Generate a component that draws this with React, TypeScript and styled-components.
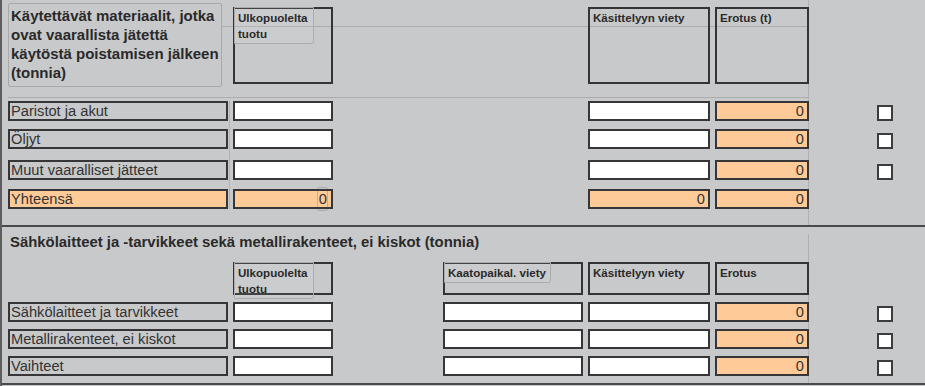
import React from "react";
import styled, { createGlobalStyle } from "styled-components";

const GlobalStyle = createGlobalStyle`
  html, body {
    margin: 0;
    padding: 0;
    background: #c8c9cb;
  }
  body {
    font-family: "Liberation Sans", Arial, sans-serif;
    color: #333;
    overflow: hidden;
  }
`;

/* Column tracks shared by header bands and data rows:
   label | outside | landfill | processed | difference | flag */
const COLS = "225px 210px 145px 127px 162px 16px";

const Page = styled.div`
  width: 925px;
  height: 386px;
  box-sizing: border-box;
  border-left: 2px solid #5e5e60;
  background: #c8c9cb;
`;

const Block = styled.section<{ $padBottom: number }>`
  margin-left: 6px;
  width: 800px;
  padding-bottom: ${(p) => p.$padBottom}px;
  border-right: 1px solid #b1b1b3;
`;

const Divider = styled.hr`
  margin: 0;
  border: 0;
  height: 2px;
  background: #4a4a4c;
`;

const HeaderBand = styled.div`
  display: grid;
  grid-template-columns: ${COLS};
  align-items: start;
  height: 97px;
  border-bottom: 1px solid #adadaf;
  background: linear-gradient(#aeaeb0, #aeaeb0) no-repeat 213px 26px / 587px 1px;
`;

const HeaderRow = styled.div<{ $gap: number }>`
  display: grid;
  grid-template-columns: ${COLS};
  align-items: start;
  margin-top: ${(p) => p.$gap}px;
`;

const TitleBox = styled.div`
  margin-top: 3px;
  width: 214px;
  height: 84px;
  box-sizing: border-box;
  padding: 2px 0 0 2px;
  border: 1px solid #a9a9ab;
  border-radius: 2px;
  font-size: 15px;
  font-weight: bold;
  line-height: 19px;
  color: #2a2a2a;
  white-space: nowrap;
`;

const SectionTitle = styled.h2`
  margin: 7px 0 0;
  padding-left: 2px;
  font-size: 14.9px;
  font-weight: bold;
  line-height: 17px;
  color: #2a2a2a;
  white-space: nowrap;
`;

const HeadBox = styled.div<{ $col: number; $w: number; $h: number; $top?: number }>`
  grid-column: ${(p) => p.$col};
  margin-top: ${(p) => p.$top ?? 0}px;
  width: ${(p) => p.$w}px;
  height: ${(p) => p.$h}px;
  box-sizing: border-box;
  border: 2px solid #343436;
  font-size: 11.6px;
  font-weight: bold;
  line-height: 16px;
  color: #2a2a2a;
`;

const HeadCaption = styled.div<{ $w?: number; $framed?: boolean }>`
  width: ${(p) => (p.$w ? `${p.$w}px` : "auto")};
  margin: -2px 0 0 -1px;
  padding: 2px 3px 1px;
  box-sizing: border-box;
  border: 1px solid ${(p) => (p.$framed ? "#acacae" : "transparent")};
  border-radius: 0 0 3px 0;
  background: ${(p) => (p.$framed ? "rgba(255,255,255,0.07)" : "transparent")};
  white-space: nowrap;
`;

const RowsArea = styled.div<{ $rule?: boolean }>`
  background: ${(p) =>
    p.$rule ? "linear-gradient(#b3b3b5, #b3b3b5) no-repeat 221px 0 / 1px 100%" : "none"};
`;

const Row = styled.div<{ $gap: number }>`
  display: grid;
  grid-template-columns: ${COLS};
  height: 20px;
  margin-top: ${(p) => p.$gap}px;
`;

type Tone = "gray" | "white" | "peach";

const toneBg: Record<Tone, string> = {
  gray: "#c8c9cb",
  white: "#ffffff",
  peach: "#fecb98",
};

const Field = styled.div<{ $col: number; $w: number; $tone: Tone; $right?: boolean }>`
  grid-column: ${(p) => p.$col};
  width: ${(p) => p.$w}px;
  height: 20px;
  box-sizing: border-box;
  border: 2px solid #363638;
  background: ${(p) => toneBg[p.$tone]};
  padding: 0 ${(p) => (p.$right ? 3 : 1)}px 0 1px;
  font-size: 14.67px;
  line-height: 16px;
  color: #333;
  text-align: ${(p) => (p.$right ? "right" : "left")};
  white-space: nowrap;
`;

const ValueChip = styled.span`
  display: inline-block;
  margin-top: -4px;
  padding: 3px 0 3px 1px;
  border: 1px solid rgba(80, 60, 40, 0.22);
  border-radius: 2px;
  line-height: 16px;
`;

const Check = styled.span`
  grid-column: 6;
  align-self: end;
  width: 16px;
  height: 16px;
  box-sizing: border-box;
  border: 2px solid #3c3c3e;
  background: #fff;
`;

type DataRow = {
  label: string;
  gap: number;
  total?: boolean;
};

const hazardRows: DataRow[] = [
  { label: "Paristot ja akut", gap: 3 },
  { label: "Öljyt", gap: 8 },
  { label: "Muut vaaralliset jätteet", gap: 11 },
  { label: "Yhteensä", gap: 9, total: true },
];

const metalRows: DataRow[] = [
  { label: "Sähkölaitteet ja tarvikkeet", gap: 7 },
  { label: "Metallirakenteet, ei kiskot", gap: 7 },
  { label: "Vaihteet", gap: 7 },
];

export default function App() {
  return (
    <>
      <GlobalStyle />
      <Page>
        <Block $padBottom={16}>
          <HeaderBand>
            <TitleBox>
              Käytettävät materiaalit, jotka
              <br />
              ovat vaarallista jätettä
              <br />
              käytöstä poistamisen jälkeen
              <br />
              (tonnia)
            </TitleBox>
            <HeadBox $col={2} $w={100} $h={77} $top={7}>
              <HeadCaption $w={80} $framed>
                Ulkopuolelta
                <br />
                tuotu
              </HeadCaption>
            </HeadBox>
            <HeadBox $col={4} $w={122} $h={77} $top={7}>
              <HeadCaption>Käsittelyyn viety</HeadCaption>
            </HeadBox>
            <HeadBox $col={5} $w={94} $h={77} $top={7}>
              <HeadCaption>Erotus (t)</HeadCaption>
            </HeadBox>
          </HeaderBand>
          <RowsArea $rule>
            {hazardRows.map((r) =>
              r.total ? (
                <Row key={r.label} $gap={r.gap}>
                  <Field $col={1} $w={220} $tone="peach">
                    {r.label}
                  </Field>
                  <Field $col={2} $w={100} $tone="peach" $right>
                    <ValueChip>0</ValueChip>
                  </Field>
                  <Field $col={4} $w={122} $tone="peach" $right>
                    0
                  </Field>
                  <Field $col={5} $w={94} $tone="peach" $right>
                    0
                  </Field>
                </Row>
              ) : (
                <Row key={r.label} $gap={r.gap}>
                  <Field $col={1} $w={220} $tone="gray">
                    {r.label}
                  </Field>
                  <Field $col={2} $w={100} $tone="white" />
                  <Field $col={4} $w={122} $tone="white" />
                  <Field $col={5} $w={94} $tone="peach" $right>
                    0
                  </Field>
                  <Check />
                </Row>
              )
            )}
          </RowsArea>
        </Block>
        <Divider />
        <Block $padBottom={7}>
          <SectionTitle>
            Sähkölaitteet ja -tarvikkeet sekä metallirakenteet, ei kiskot (tonnia)
          </SectionTitle>
          <HeaderRow $gap={11}>
            <HeadBox $col={2} $w={100} $h={33}>
              <HeadCaption $w={80} $framed>
                Ulkopuolelta
                <br />
                tuotu
              </HeadCaption>
            </HeadBox>
            <HeadBox $col={3} $w={140} $h={33}>
              <HeadCaption $w={107} $framed>
                Kaatopaikal. viety
              </HeadCaption>
            </HeadBox>
            <HeadBox $col={4} $w={122} $h={33}>
              <HeadCaption>Käsittelyyn viety</HeadCaption>
            </HeadBox>
            <HeadBox $col={5} $w={94} $h={33}>
              <HeadCaption>Erotus</HeadCaption>
            </HeadBox>
          </HeaderRow>
          <RowsArea>
            {metalRows.map((r) => (
              <Row key={r.label} $gap={r.gap}>
                <Field $col={1} $w={220} $tone="gray">
                  {r.label}
                </Field>
                <Field $col={2} $w={100} $tone="white" />
                <Field $col={3} $w={140} $tone="white" />
                <Field $col={4} $w={122} $tone="white" />
                <Field $col={5} $w={94} $tone="peach" $right>
                  0
                </Field>
                <Check />
              </Row>
            ))}
          </RowsArea>
        </Block>
        <Divider />
      </Page>
    </>
  );
}
